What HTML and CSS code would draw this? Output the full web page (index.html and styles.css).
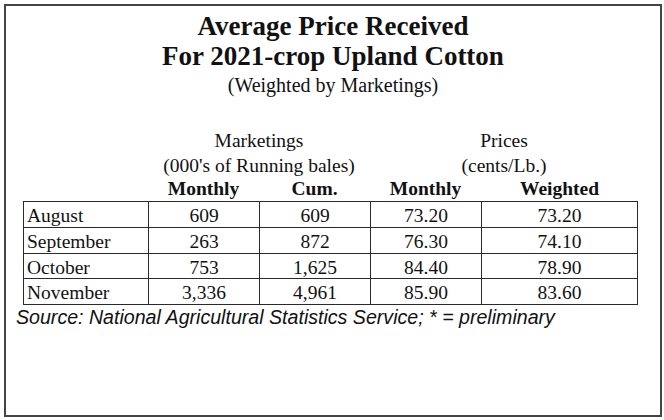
FILE: index.html
```html
<!DOCTYPE html>
<html>
<head>
<meta charset="utf-8">
<link rel="stylesheet" href="styles.css">
</head>
<body>
<div class="frame">
  <h1 class="title">Average Price Received<br>For 2021-crop Upland Cotton</h1>
  <p class="subtitle">(Weighted by Marketings)</p>
  <table class="data">
    <colgroup>
      <col class="c1"><col class="c2"><col class="c3"><col class="c4"><col class="c5">
    </colgroup>
    <thead>
      <tr class="h1">
        <th></th><th colspan="2">Marketings</th><th colspan="2">Prices</th>
      </tr>
      <tr class="h2">
        <th></th><th colspan="2">(000's of Running bales)</th><th colspan="2">(cents/Lb.)</th>
      </tr>
      <tr class="h3">
        <th></th><th>Monthly</th><th>Cum.</th><th>Monthly</th><th>Weighted</th>
      </tr>
    </thead>
    <tbody>
      <tr><td>August</td><td>609</td><td>609</td><td>73.20</td><td>73.20</td></tr>
      <tr><td>September</td><td>263</td><td>872</td><td>76.30</td><td>74.10</td></tr>
      <tr><td>October</td><td>753</td><td>1,625</td><td>84.40</td><td>78.90</td></tr>
      <tr><td>November</td><td>3,336</td><td>4,961</td><td>85.90</td><td>83.60</td></tr>
    </tbody>
  </table>
  <p class="source">Source: National Agricultural Statistics Service; * = preliminary</p>
</div>
</body>
</html>
```

FILE: styles.css
```css
html, body {
  margin: 0;
  padding: 0;
  background: #ffffff;
}
.frame {
  margin: 4px;
  width: 658px;
  height: 413px;
  box-sizing: border-box;
  border: 2px solid #444;
  padding-top: 5px;
  font-family: "Liberation Serif", "Times New Roman", serif;
  color: #111;
}
.title {
  margin: 0;
  text-align: center;
  font-size: 27px;
  line-height: 30px;
  font-weight: bold;
}
.subtitle {
  margin: 0;
  text-align: center;
  font-size: 20px;
  line-height: 28px;
}
.data {
  margin: 30px 0 0 17px;
  width: 615px;
  table-layout: fixed;
  border-collapse: separate;
  border-spacing: 0;
  font-size: 19.5px;
}
.c1 { width: 125px; }
.c2, .c3, .c4 { width: 111px; }
.c5 { width: 157px; }
.data th {
  padding: 0;
  line-height: 23px;
  font-weight: normal;
  text-align: center;
  white-space: nowrap;
}
.h1 th { padding-bottom: 2px; }
.h3 th { font-weight: bold; padding-bottom: 1px; }
.data td {
  box-sizing: border-box;
  padding: 3px 0 0;
  line-height: 21.75px;
  text-align: center;
  border-top: 1px solid #2a2a2a;
  border-left: 1px solid #2a2a2a;
  white-space: nowrap;
}
.data td:first-child {
  text-align: left;
  padding-left: 3px;
}
.data td:last-child {
  border-right: 1px solid #2a2a2a;
}
.data tbody tr:last-child td {
  border-bottom: 1px solid #2a2a2a;
}
.source {
  margin: 1px 0 0 10px;
  font-family: "Liberation Sans", Arial, sans-serif;
  font-style: italic;
  font-size: 19.6px;
  line-height: 22px;
}
```
